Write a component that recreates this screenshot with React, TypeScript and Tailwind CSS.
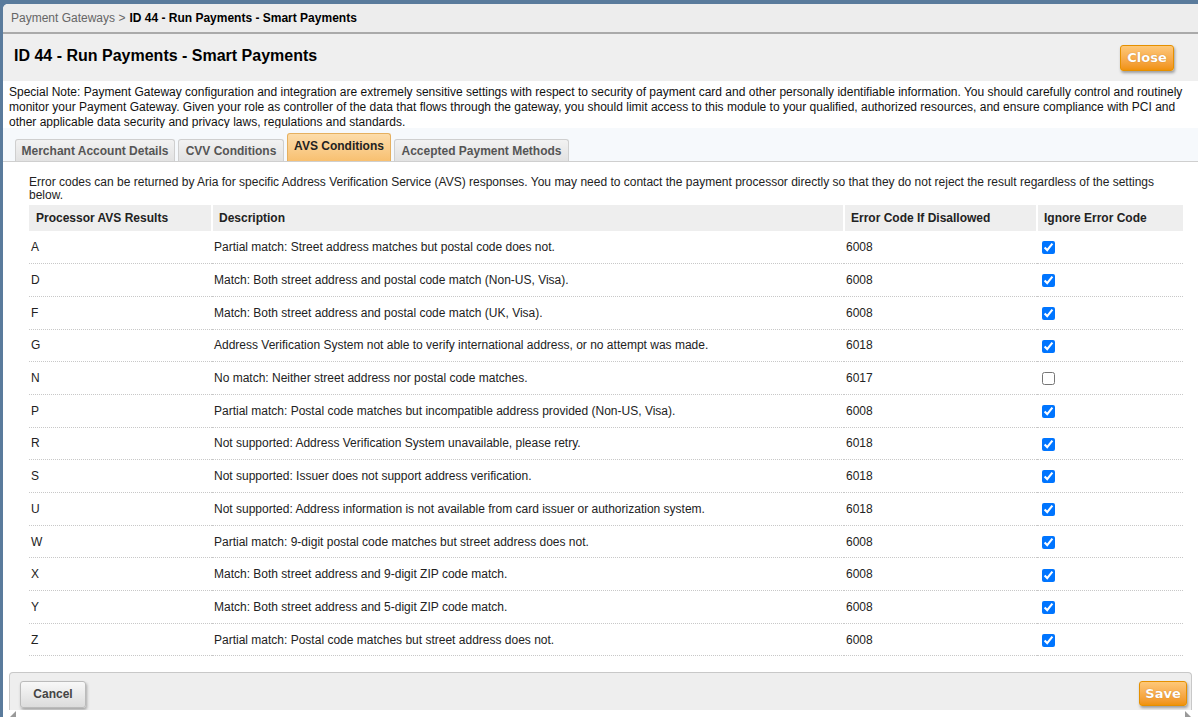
import React from "react";

const rows: [string, string, string, boolean][] = [
  ["A", "Partial match: Street address matches but postal code does not.", "6008", true],
  ["D", "Match: Both street address and postal code match (Non-US, Visa).", "6008", true],
  ["F", "Match: Both street address and postal code match (UK, Visa).", "6008", true],
  ["G", "Address Verification System not able to verify international address, or no attempt was made.", "6018", true],
  ["N", "No match: Neither street address nor postal code matches.", "6017", false],
  ["P", "Partial match: Postal code matches but incompatible address provided (Non-US, Visa).", "6008", true],
  ["R", "Not supported: Address Verification System unavailable, please retry.", "6018", true],
  ["S", "Not supported: Issuer does not support address verification.", "6018", true],
  ["U", "Not supported: Address information is not available from card issuer or authorization system.", "6018", true],
  ["W", "Partial match: 9-digit postal code matches but street address does not.", "6008", true],
  ["X", "Match: Both street address and 9-digit ZIP code match.", "6008", true],
  ["Y", "Match: Both street address and 5-digit ZIP code match.", "6008", true],
  ["Z", "Partial match: Postal code matches but street address does not.", "6008", true],
];

export default function App() {
  return (
    <div className="w-[1198px] h-[717px] bg-[#5a7b9c] pt-[4px] pl-[3px] overflow-hidden font-['Liberation_Sans',Arial,sans-serif] text-[#222]">
      <div className="h-full bg-white rounded-tl-[5px] flex flex-col overflow-hidden">
        {/* breadcrumb */}
        <div className="h-[30px] shrink-0 bg-[#ededed] border-b-2 border-[#aaaaaa] pl-[8px] flex items-center text-[12px]">
          <span className="text-[#666]">Payment Gateways &gt;</span>
          <span className="ml-[4px] font-bold text-black">ID 44 - Run Payments - Smart Payments</span>
        </div>
        {/* header */}
        <div className="h-[47px] shrink-0 bg-[#efefef] flex items-center justify-between pl-[11px] pr-[24px]">
          <div className="text-[16px] font-bold text-black -mt-[4px]">ID 44 - Run Payments - Smart Payments</div>
          <button className="w-[54px] h-[26px] rounded-[3px] border border-[#e59000] bg-gradient-to-b from-[#fec878] to-[#f09208] text-white font-bold text-[13px] font-['DejaVu_Sans',sans-serif] shadow-[1px_2px_3px_rgba(0,0,0,0.35)] [text-shadow:0_0_1px_rgba(150,80,0,0.6)]">
            Close
          </button>
        </div>
        {/* special note */}
        <div className="h-[47px] shrink-0 px-[6px] pt-[4px] text-[12px] leading-[15px] text-[#111]">
          Special Note: Payment Gateway configuration and integration are extremely sensitive settings with respect to security of payment card and other personally identifiable information. You should carefully control and routinely monitor your Payment Gateway. Given your role as controller of the data that flows through the gateway, you should limit access to this module to your qualified, authorized resources, and ensure compliance with PCI and other applicable data security and privacy laws, regulations and standards.
        </div>
        {/* tabs */}
        <div className="h-[34px] shrink-0 bg-[#f6f9fc] border-b border-[#cfcfcf] flex items-end pl-[12px] gap-[3px] text-[12px] font-bold">
          <div className="w-[160px] h-[22px] rounded-t-[3px] border border-b-0 border-[#cfcfcf] bg-gradient-to-b from-[#f2f2f2] to-[#e2e2e2] text-[#555] flex items-center justify-center">Merchant Account Details</div>
          <div className="w-[106px] h-[22px] rounded-t-[3px] border border-b-0 border-[#cfcfcf] bg-gradient-to-b from-[#f2f2f2] to-[#e2e2e2] text-[#555] flex items-center justify-center">CVV Conditions</div>
          <div className="w-[104px] h-[28px] rounded-t-[3px] border border-b-0 border-[#e5b060] bg-gradient-to-b from-[#fcdcaa] to-[#f8c070] text-[#222] flex justify-center pt-[3px]">AVS Conditions</div>
          <div className="w-[175px] h-[22px] rounded-t-[3px] border border-b-0 border-[#cfcfcf] bg-gradient-to-b from-[#f2f2f2] to-[#e2e2e2] text-[#555] flex items-center justify-center">Accepted Payment Methods</div>
        </div>
        {/* content */}
        <div className="flex-1 pl-[26px] pr-[13px] pt-[14px] text-[12px]">
          <div className="leading-[13px] text-[#222] pr-[20px]">
            Error codes can be returned by Aria for specific Address Verification Service (AVS) responses. You may need to contact the payment processor directly so that they do not reject the result regardless of the settings below.
          </div>
          <table className="mt-[3px] w-[1154px] border-collapse text-[12px]">
            <thead>
              <tr className="h-[26px]">
                <th className="w-[183px] bg-[#eeeeee] border-r-2 border-white text-left font-bold pl-[7px] text-[#222]">Processor AVS Results</th>
                <th className="w-[632px] bg-[#eeeeee] border-r-2 border-white text-left font-bold pl-[6px] text-[#222]">Description</th>
                <th className="w-[193px] bg-[#eeeeee] border-r-2 border-white text-left font-bold pl-[6px] text-[#222]">Error Code If Disallowed</th>
                <th className="bg-[#eeeeee] text-left font-bold pl-[6px] text-[#222]">Ignore Error Code</th>
              </tr>
            </thead>
            <tbody>
              {rows.map(([code, desc, err, checked]) => (
                <tr key={code} className="h-[32.7px] border-b border-dotted border-[#c8c8c8]">
                  <td className="pl-[2px]">{code}</td>
                  <td className="pl-[2px]">{desc}</td>
                  <td className="pl-[2px]">{err}</td>
                  <td className="pl-[5px]">
                    <input type="checkbox" defaultChecked={checked} className="w-[13px] h-[13px] accent-[#0075ff] align-middle" />
                  </td>
                </tr>
              ))}
            </tbody>
          </table>
        </div>
        {/* footer */}
        <div className="shrink-0 mx-[6px] h-[38px] bg-[#eeeeee] border border-b-0 border-[#c8c8c8] rounded-t-[4px] flex items-center justify-between pl-[10px] pr-[4px]">
          <button className="w-[66px] h-[27px] mt-[5px] rounded-[3px] border border-[#bbb] bg-gradient-to-b from-[#f8f8f8] to-[#dcdcdc] text-[#444] font-bold text-[12px] shadow-[1px_2px_3px_rgba(0,0,0,0.3)]">
            Cancel
          </button>
          <button className="w-[48px] h-[25px] mt-[4px] rounded-[3px] border border-[#e59000] bg-gradient-to-b from-[#fec878] to-[#f09208] text-white font-bold text-[13px] font-['DejaVu_Sans',sans-serif] shadow-[1px_2px_3px_rgba(0,0,0,0.35)] [text-shadow:0_0_1px_rgba(150,80,0,0.6)]">
            Save
          </button>
        </div>
        <div className="h-[7px] shrink-0 bg-white flex justify-between items-end px-[7px]">
          <div className="w-0 h-0 border-l-[6px] border-l-transparent border-b-[6px] border-b-[#999]" />
          <div className="w-0 h-0 border-r-[6px] border-r-transparent border-b-[6px] border-b-[#999]" />
        </div>
      </div>
    </div>
  );
}
